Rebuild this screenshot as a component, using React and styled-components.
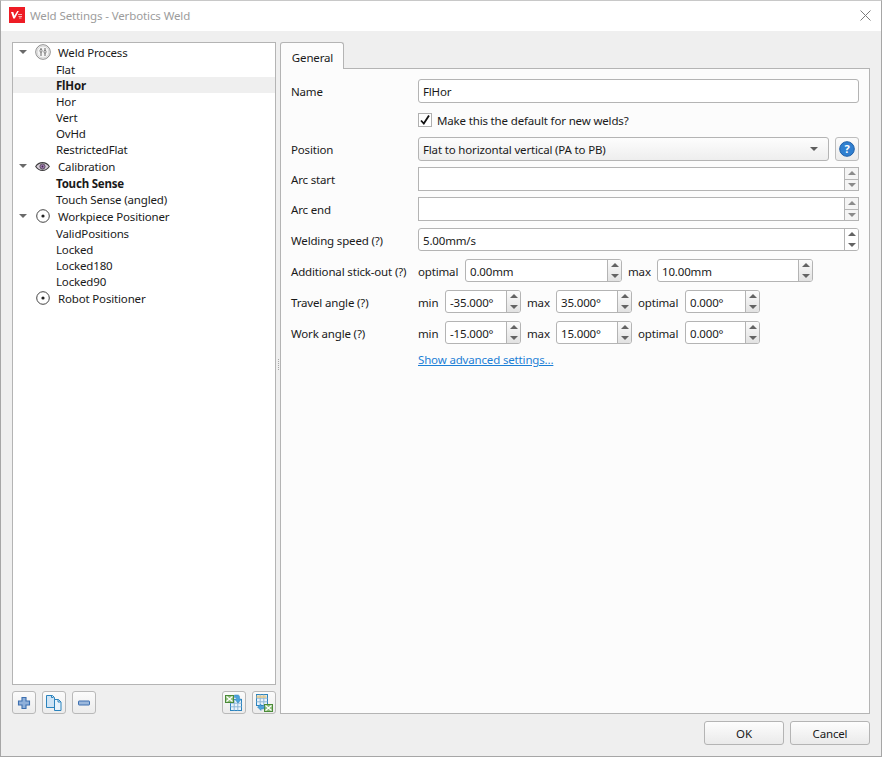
import React from 'react';
import styled, { createGlobalStyle } from 'styled-components';

const Global = createGlobalStyle`
  html, body { margin: 0; padding: 0; background: #efefef; }
  * { box-sizing: border-box; }
  body { font-family: "Noto Sans", "Open Sans", "Liberation Sans", sans-serif; font-size: 11.5px; letter-spacing: -0.16px; color: #1a1a1a; }
`;

const Window = styled.div`
  width: 882px; height: 757px; display: flex; flex-direction: column;
  border: 1px solid #a6a6a6; border-top-color: #c8c8c8; background: #efefef; overflow: hidden;
`;
const TitleBar = styled.header`
  height: 30px; flex: none; background: #fff; display: flex; align-items: center; padding: 0 10px 2px 8px; gap: 5px;
`;
const TitleText = styled.div`
  flex: 1; color: #9c9c9c; letter-spacing: -0.11px; margin-top: 1px;
`;
const Main = styled.div`
  height: 683px; flex: none; display: flex; padding: 11px 11px 0 11px;
`;
const LeftCol = styled.aside`
  width: 264px; display: flex; flex-direction: column;
`;
const TreeBox = styled.div`
  height: 644px; background: #fff; border: 1px solid #b4b4b4;
`;
const Row = styled.div`
  height: ${p => p.$parent ? 18 : 16}px; display: flex; align-items: center;
  padding-left: ${p => p.$parent ? 0 : 43}px; white-space: nowrap;
  background: ${p => p.$selected ? '#efefef' : 'transparent'};
  font-weight: ${p => p.$bold ? 700 : 400};
  letter-spacing: ${p => p.$bold ? '-0.2px' : '-0.16px'};
`;
const Arrow = styled.span`
  width: 14px; margin-left: 6px; display: flex;
  &::before { content: ''; display: ${p => p.$hidden ? 'none' : 'block'}; border-left: 4px solid transparent; border-right: 4px solid transparent; border-top: 4px solid #6a6a6a; }
`;
const IconSlot = styled.span`
  width: 19px; height: 18px; display: flex; align-items: center; justify-content: center;
`;
const ParentLabel = styled.span`
  margin-left: 6px;
`;
const ToolRow = styled.div`
  display: flex; gap: 6px; margin-top: 6px;
`;
const Spacer = styled.div` flex: 1; `;
const ToolBtn = styled.button`
  width: 24px; height: 23px; padding: 0; border: 1px solid #b9b9b9; border-radius: 3px;
  background: linear-gradient(#fbfbfb, #ececec); display: flex; align-items: center; justify-content: center;
`;
const Splitter = styled.div`
  width: 4px; height: 644px; display: flex; flex-direction: column; align-items: center; justify-content: center; gap: 1px;
  & > i { width: 1px; height: 1px; background: #a8a8a8; display: block; }
`;
const RightCol = styled.section`
  width: 590px; display: flex; flex-direction: column;
`;
const TabBar = styled.div`
  height: 26px; display: flex; position: relative; z-index: 1;
`;
const Tab = styled.div`
  width: 64px; height: 27px; background: #fcfcfc; border: 1px solid #b4b4b4; border-bottom: none; border-radius: 3px 3px 0 0;
  display: flex; align-items: center; justify-content: center; padding: 2px 0 0 1px;
`;
const Panel = styled.div`
  height: 646px; background: #fcfcfc; border: 1px solid #b4b4b4; padding: 10px 10px 0 10px; display: flex; flex-direction: column;
`;
const FormRow = styled.div`
  display: flex; align-items: center; height: ${p => p.$h || 24}px; margin-top: ${p => p.$mt || 0}px;
  --nudge: ${p => p.$nudge || 0}px;
`;
const Label = styled.label`
  width: 127px; flex: none; white-space: nowrap; padding-top: var(--nudge);
`;
const InlineLabel = styled.span`
  width: ${p => p.$w}px; flex: none; white-space: nowrap; padding-top: var(--nudge);
`;
const Gap = styled.span` width: 6px; flex: none; `;
const TextBox = styled.div`
  flex: 1; height: 100%;
  background: #fff; border: 1px solid #b4b4b4; border-radius: 3px; padding: 0 4px; display: flex; align-items: center;
`;
const CheckRow = styled.div`
  display: flex; align-items: center; gap: 5px; margin-left: 127px; height: 100%;
`;
const CheckBox = styled.span`
  width: 14px; height: 14px; border: 1px solid #b0b0b0; background: #fff; display: flex; align-items: center; justify-content: center;
`;
const Select = styled.div`
  width: 411px; height: 100%; border: 1px solid #b4b4b4; border-radius: 3px; background: linear-gradient(#fdfdfd, #eeeeee);
  display: flex; align-items: center; padding: 0 10px 0 4px; justify-content: space-between;
  &::after { content: ''; border-left: 4px solid transparent; border-right: 4px solid transparent; border-top: 4px solid #5e5e5e; }
`;
const HelpBtn = styled.button`
  width: 24px; height: 24px; margin-left: 6px; padding: 0; border: 1px solid #bdbdbd; border-radius: 3px; background: linear-gradient(#fbfbfb, #ececec);
  display: flex; align-items: center; justify-content: center;
`;
const SpinBox = styled.div`
  width: ${p => p.$w ? p.$w + 'px' : 'auto'}; flex: ${p => p.$w ? 'none' : 1}; height: 100%; display: flex; background: #fff;
  border: 1px solid #b4b4b4; border-radius: ${p => p.$square ? 0 : 3}px; overflow: hidden;
`;
const SpinValue = styled.div`
  flex: 1; padding: var(--nudge) 0 0 4px; display: flex; align-items: center; white-space: nowrap;
`;
const SpinButtons = styled.div`
  width: 14px; flex: none; border-left: 1px solid #b4b4b4; display: flex; flex-direction: column;
  background: ${p => p.$plain ? '#fff' : 'linear-gradient(#fbfbfb, #e2e2e2)'};
`;
const SpinCell = styled.div`
  flex: 1; display: flex; align-items: center; justify-content: center;
  border-top: ${p => p.$divided ? '1px solid #b4b4b4' : 'none'};
  background: ${p => p.$light ? '#f4f4f4' : 'transparent'};
  &::before {
    content: ''; border-left: 4px solid transparent; border-right: 4px solid transparent;
    ${p => p.$up ? 'border-bottom' : 'border-top'}: 4px solid ${p => p.$light ? '#8a8a8a' : '#636363'};
  }
`;
const LinkRow = styled.div`
  margin: 8px 0 0 127px; height: 16px; line-height: 16px;
`;
const Link = styled.a`
  color: #1c7fd6; text-decoration: underline;
`;
const Footer = styled.footer`
  flex: 1; display: flex; justify-content: flex-end; gap: 6px; padding: 7px 11px 0 0;
`;
const DlgBtn = styled.button`
  width: 80px; height: 24px; border: 1px solid #b4b4b4; border-radius: 3px; background: linear-gradient(#fdfdfd, #eaeaea);
  font: inherit; letter-spacing: inherit; color: #1a1a1a; padding: 0;
`;

const Logo = () => (
  <svg width="16" height="16" viewBox="0 0 16 16" style={{ flex: 'none' }}>
    <rect width="16" height="16" fill="#ee1c25" />
    <path d="M2 5h2.300l1 3.800L8.300 4h1.500L5.800 11.500H4.300z" fill="#fff" />
    <path d="M9 7.500h4M9.500 9.500h3.500M10 11h2.500" fill="none" stroke="#f8b4b4" strokeWidth="1" />
  </svg>
);
const Close = () => (
  <svg width="11" height="11" viewBox="0 0 11 11"><path d="M.5.5l10 10M10.500.5l-10 10" stroke="#7c7c7c" strokeWidth="1" fill="none" /></svg>
);
const ProcessIcon = () => (
  <svg width="16" height="16" viewBox="0 0 16 16">
    <circle cx="8" cy="8" r="7.300" fill="#f4f4f4" stroke="#8a8a8a" />
    <circle cx="8" cy="8" r="6" fill="none" stroke="#d4d4d4" />
    <path d="M6 4v8M10 4v8" stroke="#6a6a6a" strokeWidth="1" />
    <rect x="5" y="5.500" width="2" height="2.500" rx=".8" fill="#fff" stroke="#555" strokeWidth=".7" />
    <rect x="9" y="6.500" width="2" height="2.500" rx=".8" fill="#fff" stroke="#555" strokeWidth=".7" />
  </svg>
);
const EyeIcon = () => (
  <svg width="15" height="9" viewBox="0 0 15 9">
    <path d="M.7 4.500C2.500 1.700 5 .6 7.500.6s5 1.100 6.800 3.900C12.500 7.300 10 8.400 7.500 8.400S2.500 7.300.7 4.500z" fill="#d9cfdc" stroke="#3f3f3f" strokeWidth="1.100" />
    <circle cx="7.500" cy="4.500" r="2.600" fill="#a47bb5" stroke="#3f3f3f" strokeWidth=".8" />
    <circle cx="7.500" cy="4.500" r=".9" fill="#3d2c45" />
  </svg>
);
const TargetIcon = () => (
  <svg width="14" height="14" viewBox="0 0 14 14">
    <circle cx="7" cy="7" r="6.300" fill="#fff" stroke="#444" strokeWidth="1" />
    <circle cx="7" cy="7" r="1.600" fill="#222" />
  </svg>
);
const PlusIcon = () => (
  <svg width="14" height="14" viewBox="0 0 14 14"><path d="M5 1.500h4V5h3.500v4H9v3.500H5V9H1.500V5H5z" fill="#8fb0da" stroke="#3c6fb0" strokeWidth="1.100" /></svg>
);
const MinusIcon = () => (
  <svg width="14" height="6" viewBox="0 0 14 6"><rect x="1.500" y="1" width="11" height="4" rx=".5" fill="#9ab7dc" stroke="#3c6fb0" /></svg>
);
const CopyIcon = () => (
  <svg width="18" height="18" viewBox="0 0 18 18">
    <path d="M1.500 1.500h6l2 2v10h-8z" fill="#cfe4f5" stroke="#2b83bd" />
    <path d="M9.500 5.500h4l2.500 2.500v8.500H9.500z" fill="#e9f3fb" stroke="#2b83bd" />
    <path d="M6.500 1.500v2h2M13 5.500V8h2.500" fill="none" stroke="#2b83bd" />
  </svg>
);
const GridSmall = ({ x, y }) => (
  <g transform={`translate(${x} ${y})`}>
    <rect x=".5" y=".5" width="11" height="11" fill="#eaf3fa" stroke="#2b83bd" />
    <path d="M4.200 .5v11M7.800 .5v11M.5 4.200h11M.5 7.800h11" stroke="#8db7d8" strokeWidth="1" />
  </g>
);
const XBox = ({ x, y }) => (
  <g transform={`translate(${x} ${y})`}>
    <rect x=".5" y=".5" width="8" height="7" fill="#8cbc78" stroke="#4a8a38" />
    <path d="M1.500 1.500l6 5M7.500 1.500l-6 5" stroke="#fff" strokeWidth="1.200" />
  </g>
);
const ImportIcon = () => (
  <svg width="18" height="18" viewBox="0 0 18 18">
    <GridSmall x={5} y={5} />
    <XBox x={0} y={1} />
    <path d="M9.500 1h3.200c1.200 0 1.800.8 1.800 2v2H16.500L13 9 9.500 5h2V3.500H9.500z" fill="#4ca3dc" stroke="#2b83bd" strokeWidth=".5" />
  </svg>
);
const ExportIcon = () => (
  <svg width="18" height="18" viewBox="0 0 18 18">
    <GridSmall x={1} y={0} />
    <path d="M1.500 1.500h10v2.500h-10z" fill="#e3c88a" opacity=".8" />
    <XBox x={9} y={10} />
    <path d="M6 10l-3.500 3L6 16.500V15h2.500l1-2.500H6z" fill="#4ca3dc" stroke="#2b83bd" strokeWidth=".5" />
  </svg>
);
const Check = () => (
  <svg width="12" height="12" viewBox="0 0 12 12"><path d="M2 6.500l2.800 3L10 1.500" fill="none" stroke="#111" strokeWidth="1.800" /></svg>
);
const HelpIcon = () => (
  <svg width="16" height="16" viewBox="0 0 16 16">
    <circle cx="8" cy="8" r="7.300" fill="#2f7fd0" stroke="#1f5fa8" />
    <text x="8" y="12" textAnchor="middle" fontSize="11" fontWeight="700" fill="#fff" fontFamily="Noto Sans, sans-serif">?</text>
  </svg>
);

const Spin = ({ value, w, square, light, plain }) => (
  <SpinBox $w={w} $square={square}>
    <SpinValue>{value}</SpinValue>
    <SpinButtons $plain={plain}>
      <SpinCell $up $light={light} />
      <SpinCell $light={light} $divided={light} />
    </SpinButtons>
  </SpinBox>
);

const Parent = ({ icon, expanded, children }) => (
  <Row $parent>
    <Arrow $hidden={!expanded} />
    <IconSlot>{icon}</IconSlot>
    <ParentLabel>{children}</ParentLabel>
  </Row>
);

const Tree = () => (
  <TreeBox>
    <Parent icon={<ProcessIcon />} expanded>Weld Process</Parent>
    <Row>Flat</Row>
    <Row $selected $bold>FlHor</Row>
    <Row>Hor</Row>
    <Row>Vert</Row>
    <Row>OvHd</Row>
    <Row>RestrictedFlat</Row>
    <Parent icon={<EyeIcon />} expanded>Calibration</Parent>
    <Row $bold>Touch Sense</Row>
    <Row>Touch Sense (angled)</Row>
    <Parent icon={<TargetIcon />} expanded>Workpiece Positioner</Parent>
    <Row>ValidPositions</Row>
    <Row>Locked</Row>
    <Row>Locked180</Row>
    <Row>Locked90</Row>
    <Parent icon={<TargetIcon />}>Robot Positioner</Parent>
  </TreeBox>
);

export default function App() {
  return (
    <Window>
      <Global />
      <TitleBar>
        <Logo />
        <TitleText>Weld Settings - Verbotics Weld</TitleText>
        <Close />
      </TitleBar>
      <Main>
        <LeftCol>
          <Tree />
          <ToolRow>
            <ToolBtn><PlusIcon /></ToolBtn>
            <ToolBtn><CopyIcon /></ToolBtn>
            <ToolBtn><MinusIcon /></ToolBtn>
            <Spacer />
            <ToolBtn><ImportIcon /></ToolBtn>
            <ToolBtn><ExportIcon /></ToolBtn>
          </ToolRow>
        </LeftCol>
        <Splitter><i /><i /><i /><i /><i /><i /></Splitter>
        <RightCol>
          <TabBar><Tab>General</Tab></TabBar>
          <Panel>
            <FormRow>
              <Label>Name</Label>
              <TextBox>FlHor</TextBox>
            </FormRow>
            <FormRow $mt={6} $h={22}>
              <CheckRow><CheckBox><Check /></CheckBox>Make this the default for new welds?</CheckRow>
            </FormRow>
            <FormRow $mt={6}>
              <Label>Position</Label>
              <Select>Flat to horizontal vertical (PA to PB)</Select>
              <HelpBtn><HelpIcon /></HelpBtn>
            </FormRow>
            <FormRow $mt={6} $nudge={1}>
              <Label>Arc start</Label>
              <Spin square light plain />
            </FormRow>
            <FormRow $mt={6} $nudge={1}>
              <Label>Arc end</Label>
              <Spin square light plain />
            </FormRow>
            <FormRow $mt={7} $h={23} $nudge={2}>
              <Label>Welding speed (?)</Label>
              <Spin value="5.00mm/s" plain />
            </FormRow>
            <FormRow $mt={8} $h={23} $nudge={2}>
              <Label>Additional stick-out (?)</Label>
              <InlineLabel $w={47}>optimal</InlineLabel>
              <Spin value="0.00mm" w={157} />
              <Gap />
              <InlineLabel $w={29}>max</InlineLabel>
              <Spin value="10.00mm" w={156} />
            </FormRow>
            <FormRow $mt={8} $h={23} $nudge={2}>
              <Label>Travel angle (?)</Label>
              <InlineLabel $w={27}>min</InlineLabel>
              <Spin value="-35.000°" w={76} />
              <Gap />
              <InlineLabel $w={29}>max</InlineLabel>
              <Spin value="35.000°" w={76} />
              <Gap />
              <InlineLabel $w={47}>optimal</InlineLabel>
              <Spin value="0.000°" w={75} />
            </FormRow>
            <FormRow $mt={8} $h={23} $nudge={2}>
              <Label>Work angle (?)</Label>
              <InlineLabel $w={27}>min</InlineLabel>
              <Spin value="-15.000°" w={76} />
              <Gap />
              <InlineLabel $w={29}>max</InlineLabel>
              <Spin value="15.000°" w={76} />
              <Gap />
              <InlineLabel $w={47}>optimal</InlineLabel>
              <Spin value="0.000°" w={75} />
            </FormRow>
            <LinkRow><Link>Show advanced settings...</Link></LinkRow>
          </Panel>
        </RightCol>
      </Main>
      <Footer>
        <DlgBtn>OK</DlgBtn>
        <DlgBtn>Cancel</DlgBtn>
      </Footer>
    </Window>
  );
}
